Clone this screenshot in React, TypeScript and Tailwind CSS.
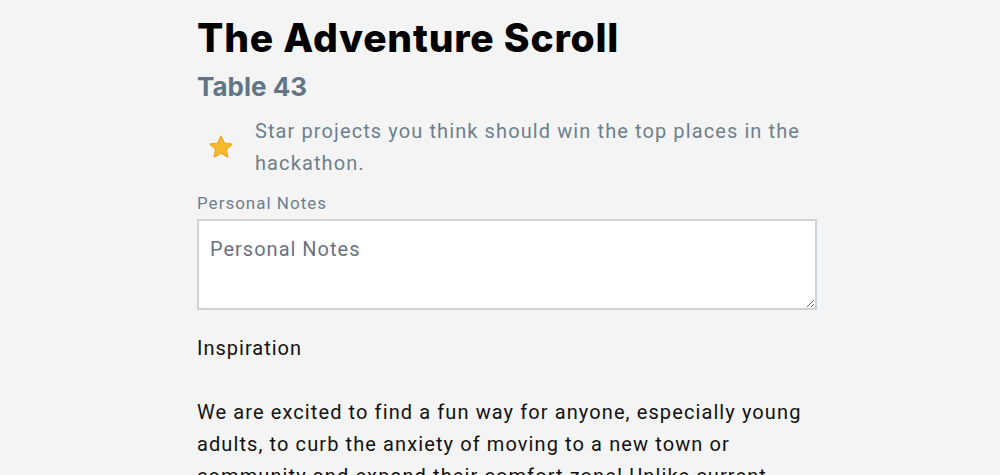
import React from "react";

function StarIcon() {
  return (
    <svg width="28" height="28" viewBox="0 0 24 24" className="shrink-0">
      <path
        d="M12 2.5l2.9 6.1 6.6.8-4.9 4.6 1.3 6.6L12 17.3l-5.9 3.3 1.3-6.6-4.9-4.6 6.6-.8z"
        fill="#f7b92b"
        stroke="#e9a81c"
        strokeWidth="1"
        strokeLinejoin="round"
      />
    </svg>
  );
}

function App() {
  return (
    <div className="min-h-screen bg-[#f4f4f4] font-['Roboto',sans-serif]">
      <div className="mx-auto w-[634px] pl-[14px] pt-[14px]">
        <h1 className="text-[39px] font-extrabold leading-[48px] text-black font-['Inter',sans-serif] tracking-[0.8px]">
          The Adventure Scroll
        </h1>
        <h2 className="mt-[9px] text-[26px] font-bold leading-[32px] text-[#627585] font-['Inter',sans-serif]">
          Table 43
        </h2>
        <div className="mt-[12px] flex items-center gap-[20px] pl-[10px]">
          <StarIcon />
          <p className="text-[20px] leading-[32px] tracking-[1.1px] text-[#6e7f8d]">
            Star projects you think should win the top places in the hackathon.
          </p>
        </div>
        <label className="mt-[13px] block text-[17px] leading-[22px] tracking-[1px] text-[#6e7f8d]">
          Personal Notes
        </label>
        <textarea
          placeholder="Personal Notes"
          className="mt-[5px] block h-[91px] w-full border-2 border-[#ccd3d8] bg-white px-[11px] py-[14px] text-[20px] leading-[28px] tracking-[1px] text-black placeholder:text-[#6b7280] outline-none"
        />
        <p className="mt-[22px] text-[20px] leading-[32px] tracking-[1px] text-[#111]">
          Inspiration
        </p>
        <p className="mt-[32px] text-[20px] leading-[32px] tracking-[1.1px] text-[#111]">
          We are excited to find a fun way for anyone, especially young adults,
          to curb the anxiety of moving to a new town or community and expand
          their comfort zone! Unlike current apps, we wanted to make exploring
          feel like an adventure.
        </p>
      </div>
    </div>
  );
}

export default App;
